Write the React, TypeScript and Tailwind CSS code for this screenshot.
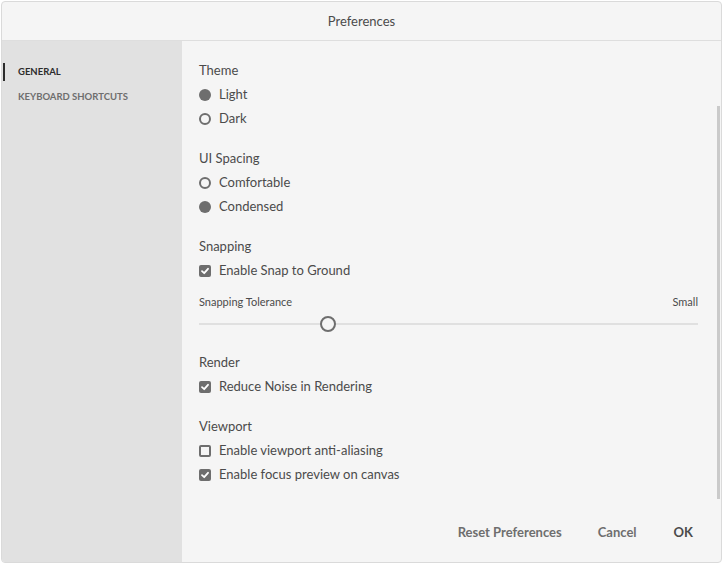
import React from "react";

const font = { fontFamily: "Lato, 'Noto Sans', sans-serif" };

function Radio({ checked, label }: { checked: boolean; label: string }) {
  return (
    <div className="flex items-center h-6">
      <span
        className={
          "w-[12px] h-[12px] rounded-full box-border " +
          (checked ? "bg-[#6e6e6e]" : "border-2 border-[#6e6e6e]")
        }
      />
      <span className="ml-[8px] text-[13px] text-[#4b4b4b]">{label}</span>
    </div>
  );
}

function Check({ checked, label }: { checked: boolean; label: string }) {
  return (
    <div className="flex items-center h-6">
      <span
        className={
          "w-[12px] h-[12px] rounded-[2px] box-border flex items-center justify-center " +
          (checked ? "bg-[#6e6e6e]" : "border-2 border-[#6e6e6e]")
        }
      >
        {checked && (
          <svg width="10" height="10" viewBox="0 0 10 10">
            <path d="M2 5.2 L4.2 7.2 L8 2.8" stroke="#fff" strokeWidth="1.8" fill="none" strokeLinecap="round" strokeLinejoin="round" />
          </svg>
        )}
      </span>
      <span className="ml-[8px] text-[13px] text-[#4b4b4b]">{label}</span>
    </div>
  );
}

function Heading({ children }: { children: React.ReactNode }) {
  return <div className="h-6 flex items-center text-[13px] text-[#4b4b4b]">{children}</div>;
}

export default function App() {
  return (
    <div className="w-[723px] h-[564px] bg-white" style={font}>
      <div className="w-[721px] h-[562px] ml-[1px] mt-[1px] border border-[#dadada] rounded-[4px] overflow-hidden flex flex-col bg-[#f5f5f5]">
        <div className="h-[39px] shrink-0 flex items-center justify-center pt-[2px] border-b border-[#dedede] text-[13px] text-[#4b4b4b]">
          Preferences
        </div>
        <div className="flex flex-1 min-h-0">
          <div className="w-[180px] shrink-0 bg-[#e1e1e1] pt-[22px]">
            <div className="relative h-[18px] flex items-center pl-[16px] text-[9.5px] font-bold text-[#2c2c2c]">
              <span className="absolute left-[1px] top-0 w-[2px] h-[18px] bg-[#2c2c2c]" />
              GENERAL
            </div>
            <div className="h-[18px] mt-[7px] flex items-center pl-[16px] text-[9.5px] font-bold text-[#6e6e6e]">
              KEYBOARD SHORTCUTS
            </div>
          </div>
          <div className="flex-1 flex flex-col relative">
            <div className="absolute right-[1px] top-[65px] w-[3px] h-[393px] bg-[#cacaca]" />
            <div className="pl-[17px] pr-[23px] pt-[18px] flex-1">
              <Heading>Theme</Heading>
              <Radio checked label="Light" />
              <Radio checked={false} label="Dark" />
              <div className="h-4" />
              <Heading>UI Spacing</Heading>
              <Radio checked={false} label="Comfortable" />
              <Radio checked label="Condensed" />
              <div className="h-4" />
              <Heading>Snapping</Heading>
              <Check checked label="Enable Snap to Ground" />
              <div className="mt-[11px] h-4 flex items-center justify-between text-[11px] text-[#4b4b4b]">
                <span>Snapping Tolerance</span>
                <span>Small</span>
              </div>
              <div className="relative h-6 mt-[2px] flex items-center">
                <div className="w-full h-[2px] bg-[#e0e0e0]" />
                <span className="absolute left-[121px] top-[4px] w-[16px] h-[16px] rounded-full border-2 border-[#6e6e6e] bg-[#f5f5f5]" />
              </div>
              <div className="h-[15px]" />
              <Heading>Render</Heading>
              <Check checked label="Reduce Noise in Rendering" />
              <div className="h-4" />
              <Heading>Viewport</Heading>
              <Check checked={false} label="Enable viewport anti-aliasing" />
              <Check checked label="Enable focus preview on canvas" />
            </div>
            <div className="h-[58px] shrink-0 flex items-center justify-end pr-[28px] pb-[1px] text-[13px] font-bold text-[#6e6e6e]">
              <span>Reset Preferences</span>
              <span className="ml-[36px]">Cancel</span>
              <span className="ml-[37px] text-[#4b4b4b]">OK</span>
            </div>
          </div>
        </div>
      </div>
    </div>
  );
}
